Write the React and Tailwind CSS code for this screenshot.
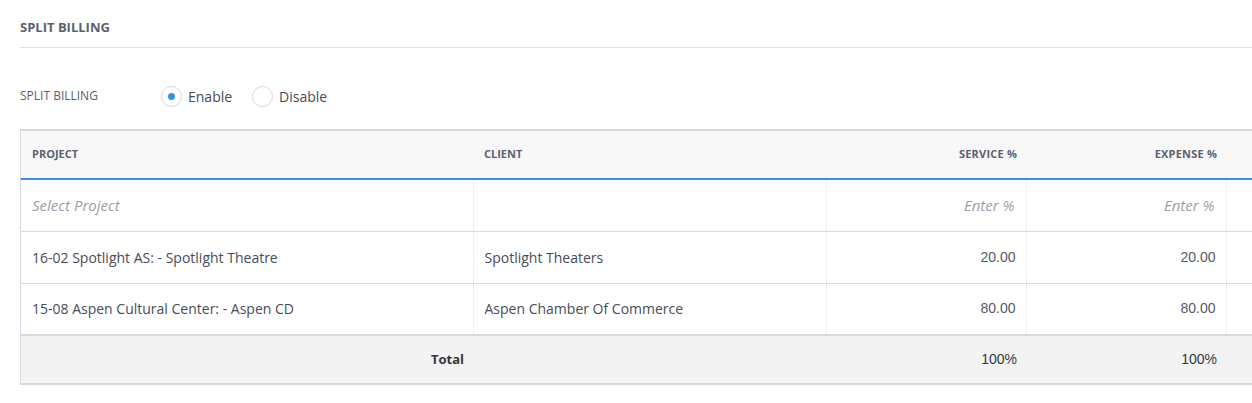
import React from 'react';

const rows = [
  { project: '16-02 Spotlight AS: - Spotlight Theatre', client: 'Spotlight Theaters', service: '20.00', expense: '20.00' },
  { project: '15-08 Aspen Cultural Center: - Aspen CD', client: 'Aspen Chamber Of Commerce', service: '80.00', expense: '80.00' },
];

const Radio = ({ checked, label }) => (
  <label className="flex items-center gap-[6px] cursor-pointer">
    <span className="w-[21px] h-[21px] rounded-full border border-[#d3d6de] bg-white flex items-center justify-center">
      {checked && <span className="w-[7px] h-[7px] rounded-full bg-[#2f93ea]" />}
    </span>
    <span className="text-[14px] text-[#474c57]">{label}</span>
  </label>
);

const App = () => {
  return (
    <div className="w-[1252px] h-[403px] bg-white overflow-hidden font-['Open_Sans',sans-serif]">
      <div className="pl-5">
        <div className="h-[48px] pt-[18px] border-b border-[#dcdee4]">
          <h2 className="text-[13px] font-bold text-[#5b616e]">SPLIT BILLING</h2>
        </div>

        <div className="flex items-center h-[46px] mt-[25px]">
          <span className="w-[141px] text-[12px] text-[#5b616e]">SPLIT BILLING</span>
          <div className="flex items-center gap-[20px]">
            <Radio checked label="Enable" />
            <Radio label="Disable" />
          </div>
        </div>

        <div className="mt-[10px] w-[1280px] border-l border-[#d5d9e1]">
          <table className="w-full table-fixed border-collapse text-[14px] text-[#474c57]">
            <colgroup>
              <col className="w-[452px]" />
              <col className="w-[353px]" />
              <col className="w-[200px]" />
              <col className="w-[200px]" />
              <col />
            </colgroup>
            <thead>
              <tr className="h-[49px] bg-[#f8f8f8] border-t-2 border-t-[#d5d9e1] border-b-2 border-b-[#3392e8]">
                <th className="text-left pl-[11px] text-[11px] font-bold text-[#5b616e]">PROJECT</th>
                <th className="text-left pl-[11px] text-[11px] font-bold text-[#5b616e]">CLIENT</th>
                <th className="text-right pr-[9px] text-[11px] font-bold text-[#5b616e] tracking-[0.2px]">SERVICE %</th>
                <th className="text-right pr-[9px] text-[11px] font-bold text-[#5b616e] tracking-[0.2px]">EXPENSE %</th>
                <th />
              </tr>
            </thead>
            <tbody>
              <tr className="h-[52px] border-b border-[#d8dce5]">
                <td className="pl-[11px] italic text-[15px] text-[#9a9ea6]">Select Project</td>
                <td className="border-l border-dotted border-[#dcdfe5]" />
                <td className="border-l border-dotted border-[#dcdfe5] text-right pr-[11px] italic text-[15px] text-[#9a9ea6]">Enter %</td>
                <td className="border-l border-dotted border-[#dcdfe5] text-right pr-[11px] italic text-[15px] text-[#9a9ea6]">Enter %</td>
                <td className="border-l border-dotted border-[#dcdfe5]" />
              </tr>
              {rows.map((r) => (
                <tr key={r.project} className="h-[52px] border-b border-[#d8dce5] last:border-b-0">
                  <td className="pl-[11px]">{r.project}</td>
                  <td className="pl-[11px] border-l border-dotted border-[#dcdfe5]">{r.client}</td>
                  <td className="pr-[10px] text-right border-l border-dotted border-[#dcdfe5] font-['Liberation_Sans',sans-serif] text-[14px] text-[#555a64]">{r.service}</td>
                  <td className="pr-[10px] text-right border-l border-dotted border-[#dcdfe5] font-['Liberation_Sans',sans-serif] text-[14px] text-[#555a64]">{r.expense}</td>
                  <td className="border-l border-dotted border-[#dcdfe5]" />
                </tr>
              ))}
            </tbody>
            <tfoot>
              <tr className="h-[49px] bg-[#f3f3f3] border-t-2 border-t-[#d5d9e1] border-b-2 border-b-[#d5d9e1]">
                <td className="text-right pr-[9px] text-[13px] font-bold text-[#333740]">Total</td>
                <td />
                <td className="text-right pr-[9px] font-['Liberation_Sans',sans-serif] text-[14px] text-[#333740]">100%</td>
                <td className="text-right pr-[9px] font-['Liberation_Sans',sans-serif] text-[14px] text-[#333740]">100%</td>
                <td />
              </tr>
            </tfoot>
          </table>
        </div>
      </div>
    </div>
  );
};

export default App;
